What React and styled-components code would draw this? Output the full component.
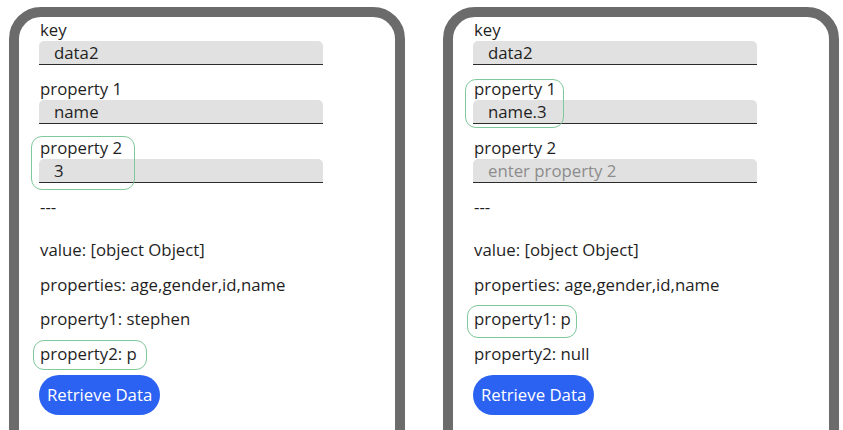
import React from "react";
import styled, { createGlobalStyle } from "styled-components";

const GlobalStyle = createGlobalStyle`
  body {
    margin: 0;
    background: #ffffff;
    font-family: "Open Sans", "Noto Sans", sans-serif;
    color: #1f1f1f;
    overflow: hidden;
  }
`

const Page = styled.div`
  display: flex;
  gap: 38px;
  padding: 7px 0 0 9px;
  height: 430px;
  box-sizing: border-box;
  overflow: hidden;
`

const Phone = styled.div`
  position: relative;
  width: 396px;
  height: 460px;
  box-sizing: border-box;
  border: 10px solid #6b6b6b;
  border-radius: 32px;
  padding: 2px 21px 0;
  display: flex;
  flex-direction: column;
`

const Field = styled.div`
  display: flex;
  flex-direction: column;
  margin-bottom: 13px;
`

const Label = styled.label`
  font-size: 16.8px;
  line-height: 22px;
`

const Input = styled.input`
  width: 284px;
  height: 24px;
  box-sizing: border-box;
  margin-left: -1px;
  border: none;
  border-bottom: 1.5px solid #2b2b2b;
  border-radius: 5px 5px 0 0;
  background: #e1e1e1;
  padding: 0 0 0 15px;
  font-family: inherit;
  font-size: 16.8px;
  color: #1f1f1f;
  outline: none;

  &::placeholder {
    color: #8c8c8c;
  }
`

const Divider = styled.div`
  font-size: 16.8px;
  line-height: 22px;
  margin-bottom: 21px;
`

const Line = styled.p`
  margin: 0 0 12.5px;
  font-size: 16.8px;
  line-height: 22px;
  white-space: nowrap;
`

const Button = styled.button`
  align-self: flex-start;
  margin: -2.5px 0 0 -1px;
  height: 40px;
  padding: 0 8px;
  border: none;
  border-radius: 20px;
  background: #2b62f2;
  color: #ffffff;
  font-family: inherit;
  font-size: 16.8px;
  cursor: pointer;
`

const Mark = styled.div`
  position: absolute;
  left: ${p => p.x}px;
  top: ${p => p.y}px;
  width: ${p => p.w}px;
  height: ${p => p.h}px;
  border: 1.5px solid #7fc89b;
  border-radius: 11px;
  box-sizing: border-box;
  pointer-events: none;
`

function Screen({ prop1, prop2, result1, result2, marks }) {
  return (
    <Phone>
      <Field>
        <Label>key</Label>
        <Input defaultValue="data2" />
      </Field>
      <Field>
        <Label>property 1</Label>
        <Input defaultValue={prop1} placeholder="enter property 1" />
      </Field>
      <Field>
        <Label>property 2</Label>
        <Input defaultValue={prop2} placeholder="enter property 2" />
      </Field>
      <Divider>---</Divider>
      <Line>value: [object Object]</Line>
      <Line>properties: age,gender,id,name</Line>
      <Line>property1: {result1}</Line>
      <Line>property2: {result2}</Line>
      <Button>Retrieve Data</Button>
      {marks.map((m, i) => <Mark key={i} {...m} />)}
    </Phone>
  )
}

export default function App() {
  return (
    <>
      <GlobalStyle />
      <Page>
        <Screen
          prop1="name"
          prop2="3"
          result1="stephen"
          result2="p"
          marks={[
            { x: 12, y: 119, w: 104, h: 54 },
            { x: 14, y: 323, w: 114, h: 30 },
          ]}
        />
        <Screen
          prop1="name.3"
          prop2=""
          result1="p"
          result2="null"
          marks={[
            { x: 12, y: 62, w: 99, h: 49 },
            { x: 14, y: 288, w: 110, h: 33 },
          ]}
        />
      </Page>
    </>
  )
}
